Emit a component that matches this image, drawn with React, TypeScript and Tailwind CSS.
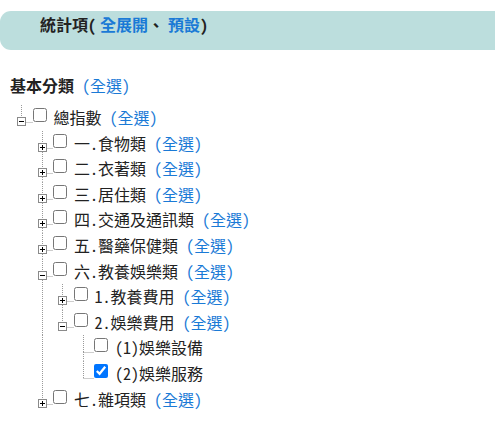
import React from 'react';

interface TreeNode {
  label: string;
  selectAll?: boolean;
  expanded?: boolean;
  checked?: boolean;
  children?: TreeNode[];
}

const collapsed = [{ label: '' }];

const tree: TreeNode = {
  label: '總指數',
  selectAll: true,
  expanded: true,
  children: [
    { label: '一.食物類', selectAll: true, children: collapsed },
    { label: '二.衣著類', selectAll: true, children: collapsed },
    { label: '三.居住類', selectAll: true, children: collapsed },
    { label: '四.交通及通訊類', selectAll: true, children: collapsed },
    { label: '五.醫藥保健類', selectAll: true, children: collapsed },
    {
      label: '六.教養娛樂類',
      selectAll: true,
      expanded: true,
      children: [
        { label: '1.教養費用', selectAll: true, children: collapsed },
        {
          label: '2.娛樂費用',
          selectAll: true,
          expanded: true,
          children: [
            { label: '(1)娛樂設備' },
            { label: '(2)娛樂服務', checked: true },
          ],
        },
      ],
    },
    { label: '七.雜項類', selectAll: true, children: collapsed },
  ],
};

interface Row {
  node: TreeNode;
  guides: boolean[];
  last: boolean;
}

function flatten(node: TreeNode, guides: boolean[], last: boolean, out: Row[]) {
  out.push({ node, guides, last });
  if (node.expanded && node.children) {
    node.children.forEach((c, i) =>
      flatten(c, [...guides, !last], i === node.children!.length - 1, out)
    );
  }
  return out;
}

const rows = flatten(tree, [], true, []);

const DOT = { stroke: '#9a9a9a', strokeWidth: 1, strokeDasharray: '1 1' };

// dotted guide of an ancestor that still has siblings below
const Guide = ({ on }: { on: boolean }) => (
  <svg className="w-[20.5px] h-full shrink-0">
    {on && <line x1="9.5" y1="0" x2="9.5" y2="100%" {...DOT} />}
  </svg>
);

// connector with the +/- toggle box
const Connector = ({ last, toggle, open }: { last: boolean; toggle: boolean; open: boolean }) => (
  <svg className="w-[20.5px] h-full shrink-0">
    <line x1="9.5" y1="0" x2="9.5" y2="17" {...DOT} />
    {!last && <line x1="9.5" y1="17" x2="9.5" y2="100%" {...DOT} />}
    <line x1="9.5" y1="17.5" x2="21" y2="17.5" {...DOT} />
    {toggle && (
      <g>
        <rect x="5.5" y="12.5" width="8" height="8" fill="#fff" stroke="#8a8a8a" />
        <line x1="7" y1="16.5" x2="12" y2="16.5" stroke="#000" />
        {!open && <line x1="9.5" y1="14" x2="9.5" y2="19" stroke="#000" />}
      </g>
    )}
  </svg>
);

const TreeRow = ({ row }: { row: Row }) => {
  const { node, guides, last } = row;
  return (
    <div className="flex h-[25.6px] pl-[12px]">
      {guides.map((g, i) => (
        <Guide key={i} on={g} />
      ))}
      <Connector last={last} toggle={!!node.children} open={!!node.expanded} />
      <input
        type="checkbox"
        defaultChecked={node.checked}
        className="m-0 mt-[3px] w-[14px] h-[14px] shrink-0"
      />
      <span className="ml-[7px] leading-6 text-[16px] text-[#222] whitespace-nowrap">
        {node.label}
        {node.selectAll && <span className="text-[#1a7ad6]"> (全選)</span>}
      </span>
    </div>
  );
};

export default function App() {
  return (
    <div className="w-[495px] h-[427px] bg-white pt-[11px] font-['Noto_Sans_CJK_TC',sans-serif] [font-feature-settings:'hwid'] overflow-hidden">
      <div className="h-[39px] bg-[#bcdedd] rounded-l-[11px] pl-[40px] pt-[1px]">
        <span className="text-[16px] leading-6 font-bold text-[#222]">
          統計項(<span className="ml-[4px] text-[#1a7ad6]">全展開</span>、
          <span className="ml-[4px] text-[#1a7ad6]">預設</span>)
        </span>
      </div>
      <div className="mt-[23px] pl-[10px] text-[16px] leading-6">
        <span className="font-bold text-[#222]">基本分類</span>
        <span className="text-[#1a7ad6]"> (全選)</span>
      </div>
      <div className="mt-[8px]">
        {rows.map((r, i) => (
          <TreeRow key={i} row={r} />
        ))}
      </div>
    </div>
  );
}
